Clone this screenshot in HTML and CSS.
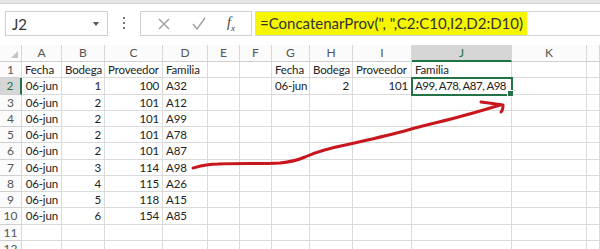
FILE: index.html
```html
<!DOCTYPE html>
<html lang="es">
<head>
    <meta charset="UTF-8">
    <title>ConcatenarProv</title>
    <link rel="stylesheet" href="styles.css">
</head>
<body>
    <div class="window">
        <div class="top-band"></div>

        <div class="formula-bar">
            <div class="name-box">
                <span>J2</span>
                <span class="caret"></span>
            </div>
            <div class="grip"><i></i><i></i><i></i></div>
            <div class="fx-box">
                <svg class="tool" width="14" height="14" viewBox="0 0 14 14">
                    <path d="M2 2 L12 12 M12 2 L2 12" stroke="#9a9a9a" stroke-width="1.3" fill="none"/>
                </svg>
                <svg class="tool" width="16" height="14" viewBox="0 0 16 14">
                    <path d="M2 7 L6 12 L14 1" stroke="#9a9a9a" stroke-width="1.3" fill="none"/>
                </svg>
                <span class="fx">f<sub>x</sub></span>
            </div>
            <div class="formula-input">
                <span class="formula">=ConcatenarProv(", ",C2:C10,I2,D2:D10)</span>
            </div>
        </div>

        <div class="sheet">
            <div class="corner"><span class="tri"></span></div>
            <div class="col-head">A</div>
            <div class="col-head">B</div>
            <div class="col-head">C</div>
            <div class="col-head">D</div>
            <div class="col-head">E</div>
            <div class="col-head">F</div>
            <div class="col-head">G</div>
            <div class="col-head">H</div>
            <div class="col-head">I</div>
            <div class="col-head active">J</div>
            <div class="col-head">K</div>
            <div class="col-head"></div>

            <!-- fila 1 -->
            <div class="row-head">1</div>
            <div class="cell">Fecha</div>
            <div class="cell">Bodega</div>
            <div class="cell">Proveedor</div>
            <div class="cell">Familia</div>
            <div class="cell"></div>
            <div class="cell"></div>
            <div class="cell">Fecha</div>
            <div class="cell">Bodega</div>
            <div class="cell">Proveedor</div>
            <div class="cell">Familia</div>
            <div class="cell"></div>
            <div class="cell"></div>

            <!-- fila 2 -->
            <div class="row-head active">2</div>
            <div class="cell num">06-jun</div>
            <div class="cell num">1</div>
            <div class="cell num">100</div>
            <div class="cell">A32</div>
            <div class="cell"></div>
            <div class="cell"></div>
            <div class="cell num">06-jun</div>
            <div class="cell num">2</div>
            <div class="cell num">101</div>
            <div class="cell selected">A99, A78, A87, A98</div>
            <div class="cell"></div>
            <div class="cell"></div>

            <div class="row-head">3</div>
            <div class="cell num">06-jun</div>
            <div class="cell num">2</div>
            <div class="cell num">101</div>
            <div class="cell">A12</div>
            <div class="cell"></div><div class="cell"></div><div class="cell"></div><div class="cell"></div>
            <div class="cell"></div><div class="cell"></div><div class="cell"></div><div class="cell"></div>

            <div class="row-head">4</div>
            <div class="cell num">06-jun</div>
            <div class="cell num">2</div>
            <div class="cell num">101</div>
            <div class="cell">A99</div>
            <div class="cell"></div><div class="cell"></div><div class="cell"></div><div class="cell"></div>
            <div class="cell"></div><div class="cell"></div><div class="cell"></div><div class="cell"></div>

            <div class="row-head">5</div>
            <div class="cell num">06-jun</div>
            <div class="cell num">2</div>
            <div class="cell num">101</div>
            <div class="cell">A78</div>
            <div class="cell"></div><div class="cell"></div><div class="cell"></div><div class="cell"></div>
            <div class="cell"></div><div class="cell"></div><div class="cell"></div><div class="cell"></div>

            <div class="row-head">6</div>
            <div class="cell num">06-jun</div>
            <div class="cell num">2</div>
            <div class="cell num">101</div>
            <div class="cell">A87</div>
            <div class="cell"></div><div class="cell"></div><div class="cell"></div><div class="cell"></div>
            <div class="cell"></div><div class="cell"></div><div class="cell"></div><div class="cell"></div>

            <div class="row-head">7</div>
            <div class="cell num">06-jun</div>
            <div class="cell num">3</div>
            <div class="cell num">114</div>
            <div class="cell">A98</div>
            <div class="cell"></div><div class="cell"></div><div class="cell"></div><div class="cell"></div>
            <div class="cell"></div><div class="cell"></div><div class="cell"></div><div class="cell"></div>

            <div class="row-head">8</div>
            <div class="cell num">06-jun</div>
            <div class="cell num">4</div>
            <div class="cell num">115</div>
            <div class="cell">A26</div>
            <div class="cell"></div><div class="cell"></div><div class="cell"></div><div class="cell"></div>
            <div class="cell"></div><div class="cell"></div><div class="cell"></div><div class="cell"></div>

            <div class="row-head">9</div>
            <div class="cell num">06-jun</div>
            <div class="cell num">5</div>
            <div class="cell num">118</div>
            <div class="cell">A15</div>
            <div class="cell"></div><div class="cell"></div><div class="cell"></div><div class="cell"></div>
            <div class="cell"></div><div class="cell"></div><div class="cell"></div><div class="cell"></div>

            <div class="row-head">10</div>
            <div class="cell num">06-jun</div>
            <div class="cell num">6</div>
            <div class="cell num">154</div>
            <div class="cell">A85</div>
            <div class="cell"></div><div class="cell"></div><div class="cell"></div><div class="cell"></div>
            <div class="cell"></div><div class="cell"></div><div class="cell"></div><div class="cell"></div>

            <div class="row-head">11</div>
            <div class="cell"></div><div class="cell"></div><div class="cell"></div><div class="cell"></div>
            <div class="cell"></div><div class="cell"></div><div class="cell"></div><div class="cell"></div>
            <div class="cell"></div><div class="cell"></div><div class="cell"></div><div class="cell"></div>

            <div class="row-head">12</div>
            <div class="cell"></div><div class="cell"></div><div class="cell"></div><div class="cell"></div>
            <div class="cell"></div><div class="cell"></div><div class="cell"></div><div class="cell"></div>
            <div class="cell"></div><div class="cell"></div><div class="cell"></div><div class="cell"></div>

            <!-- flecha dibujada a mano -->
            <svg class="arrow" width="600" height="200" viewBox="0 0 600 200">
                <path d="M193 123 C200 121 206 119 218 119 C240 118 262 119 280 118 C292 117 298 115 305 112 C318 106 335 102 350 99 C372 94 390 90 408 85 C428 79 445 76 462 71 C478 67 490 63 500 60"
                      stroke="#c8161d" stroke-width="3" fill="none" stroke-linecap="round"/>
                <path d="M481 57 C490 58 497 59 503 60 C503 63 502 66 501 67"
                      stroke="#c8161d" stroke-width="3" fill="none" stroke-linecap="round" stroke-linejoin="round"/>
            </svg>
        </div>
    </div>
</body>
</html>
```

FILE: styles.css
```css
* {
    box-sizing: border-box;
}

body {
    margin: 0;
    background: #fff;
    font-family: Lato, "Liberation Sans", Arial, sans-serif;
    color: #222;
    overflow: hidden;
}

.window {
    width: 600px;
    height: 249px;
    overflow: hidden;
}

.top-band {
    height: 4px;
    background: #e6e6e6;
    border-bottom: 1px solid #d2d2d2;
}

.formula-bar {
    display: flex;
    align-items: flex-start;
    height: 41px;
    padding-top: 7px;
}

.name-box {
    display: flex;
    align-items: center;
    justify-content: space-between;
    width: 103px;
    height: 25px;
    margin-left: 5px;
    padding: 0 6px 0 6px;
    border: 1px solid #cfcfcf;
    font-size: 15px;
    color: #333;
}

.caret {
    width: 0;
    height: 0;
    border-left: 3px solid transparent;
    border-right: 3px solid transparent;
    border-top: 4px solid #555;
    margin-right: 2px;
}

.grip {
    display: flex;
    flex-direction: column;
    gap: 3px;
    width: 32px;
    align-items: center;
    padding-top: 6px;
}

.grip i {
    display: block;
    width: 2px;
    height: 2px;
    background: #777;
}

.fx-box {
    display: flex;
    align-items: center;
    justify-content: space-around;
    width: 112px;
    height: 25px;
    border: 1px solid #cfcfcf;
    padding: 0 6px;
}

.fx {
    font-family: "Liberation Serif", serif;
    font-style: italic;
    font-size: 14px;
    color: #444;
}

.fx sub {
    font-size: 9px;
}

.formula-input {
    flex: 1;
    height: 25px;
    margin-left: 3px;
    border-top: 1px solid #d4d4d4;
    border-bottom: 1px solid #d4d4d4;
    display: flex;
    align-items: center;
}

.formula {
    background: #f6f600;
    padding: 2px 4px 2px 5px;
    font-size: 15px;
    line-height: 19px;
    color: #333;
}

.sheet {
    position: relative;
    display: grid;
    grid-template-columns: 22px 40px 43px 58px 45px 32px 32px 38px 43px 59px 100px 75px 13px;
    grid-template-rows: 17px repeat(12, 16.27px);
    font-size: 11.5px;
    letter-spacing: -0.15px;
}

.corner,
.col-head,
.row-head {
    background: #fbfbfb;
    color: #555;
    border-right: 1px solid #d8d8d8;
    border-bottom: 1px solid #cfcfcf;
    letter-spacing: 0;
}

.corner {
    position: relative;
}

.tri {
    position: absolute;
    right: 3px;
    bottom: 3px;
    width: 0;
    height: 0;
    border-left: 7px solid transparent;
    border-bottom: 7px solid #c4c4c4;
}

.col-head {
    text-align: center;
    line-height: 16px;
    font-size: 12px;
}

.col-head.active {
    background: #d6d6d6;
    color: #217346;
    border-bottom: 2px solid #217346;
}

.row-head {
    text-align: center;
    line-height: 15px;
    font-size: 12px;
}

.row-head.active {
    background: #d6d6d6;
    color: #217346;
    border-right: 2px solid #217346;
}

.cell {
    border-right: 1px solid #dadada;
    border-bottom: 1px solid #dadada;
    padding: 0 3px;
    line-height: 15px;
    white-space: nowrap;
    overflow: visible;
}

.cell.num {
    text-align: right;
}

.cell.selected {
    position: relative;
    outline: 2px solid #217346;
    outline-offset: -1px;
    letter-spacing: -0.5px;
}

.cell.selected::after {
    content: "";
    position: absolute;
    right: -3px;
    bottom: -3px;
    width: 5px;
    height: 5px;
    background: #217346;
    border: 1px solid #fff;
}

.arrow {
    position: absolute;
    left: 0;
    top: 0;
    pointer-events: none;
}
```
